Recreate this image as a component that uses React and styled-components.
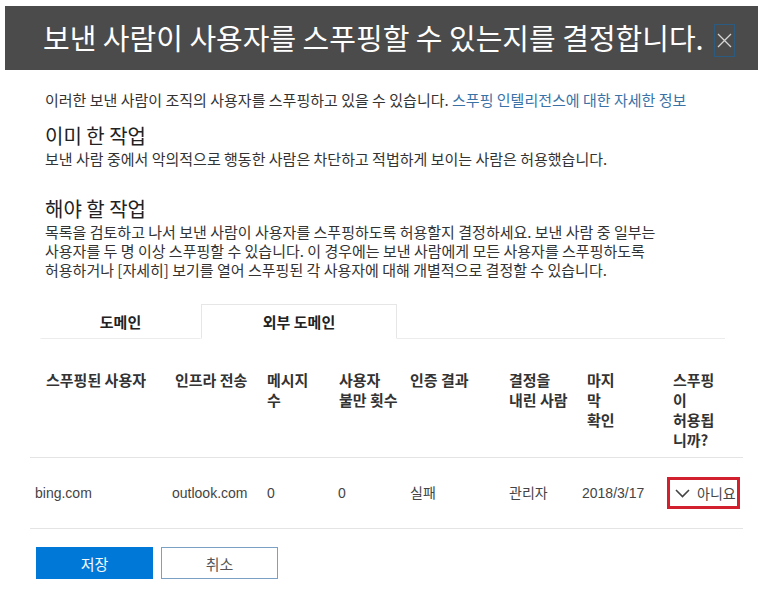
import styled, { createGlobalStyle } from 'styled-components';

const GlobalStyle = createGlobalStyle`
	body {
		margin: 0;
		background-color: #fff;
		font-family: "Noto Sans CJK KR", "Noto Sans", sans-serif;
		color: #333;
	}
`;

const Page = styled.div`
	width: 758px;
	height: 605px;
	overflow: hidden;
`;

const TitleBar = styled.header`
	display: flex;
	align-items: center;
	gap: 10px;
	height: 64px;
	margin: 6px 0 0 5px;
	padding-left: 38px;
	background-color: #4b4b4b;
`;

const Title = styled.h1`
	margin: -2px 0 0;
	color: #fff;
	font-size: 29px;
	font-weight: 400;
	line-height: 1;
	white-space: nowrap;
`;

const CloseButton = styled.button`
	display: flex;
	align-items: center;
	justify-content: center;
	width: 21px;
	height: 33px;
	margin-top: 4px;
	padding: 0;
	border: 1px solid #2c5b82;
	background: transparent;
	color: #d6d6d6;
`;

const Content = styled.main`
	padding-left: 45px;
`;

const Lead = styled.p`
	margin: 20px 0 0;
	font-size: 15px;
	line-height: 20px;
	color: #333;
	white-space: nowrap;
	& a {
		color: #3a72a6;
		text-decoration: none;
	}
`;

const SectionTitle = styled.h2`
	margin: ${p => p.$gap}px 0 0;
	font-size: 20px;
	font-weight: 400;
	line-height: 26px;
	color: #222;
`;

const Body = styled.p`
	margin: 0;
	font-size: 15px;
	line-height: ${p => p.$lh || 20}px;
	color: #333;
	white-space: nowrap;
`;

const Tabs = styled.div`
	display: flex;
	width: 685px;
	height: 35px;
	margin: 25px 0 0 -5px;
`;

const Tab = styled.div`
	display: flex;
	align-items: center;
	justify-content: center;
	box-sizing: border-box;
	width: ${p => p.$width}px;
	font-size: 15px;
	font-weight: 700;
	color: #222;
	border: 1px solid ${p => (p.$active ? '#e6e6e6' : 'transparent')};
	border-bottom: 1px solid ${p => (p.$active ? 'transparent' : '#ececec')};
`;

const TabFiller = styled.div`
	flex: 1;
	border-bottom: 1px solid #ececec;
`;

const Table = styled.div`
	width: 713px;
	margin-left: -15px;
`;

const Row = styled.div`
	display: grid;
	grid-template-columns: 137px 95px 71px 72px 99px 73px 86px 1fr;
	align-items: ${p => (p.$head ? 'start' : 'center')};
	box-sizing: border-box;
	height: ${p => (p.$head ? 119 : 71)}px;
	padding: ${p => (p.$head ? '31px 0 0 5px' : '0 0 0 5px')};
	border-bottom: 1px solid #e4e4e4;
`;

const HeadCell = styled.div`
	padding-left: ${p => p.$indent || 0}px;
	font-size: 15px;
	font-weight: 700;
	line-height: 20px;
	color: #333;
	white-space: nowrap;
`;

const Cell = styled.div`
	font-family: "Liberation Sans", "Noto Sans CJK KR", sans-serif;
	font-size: 14px;
	line-height: 20px;
	color: #444;
	white-space: nowrap;
`;

const Dropdown = styled.div`
	display: flex;
	align-items: center;
	gap: 7px;
	box-sizing: border-box;
	width: 73px;
	height: 32px;
	margin-left: -1px;
	padding-left: 5px;
	border: 3px solid #d3202e;
	font-size: 14px;
	color: #444;
	white-space: nowrap;
`;

const Actions = styled.div`
	display: flex;
	gap: 8px;
	margin: 18px 0 0 -9px;
`;

const Button = styled.button`
	box-sizing: border-box;
	width: 117px;
	height: 32px;
	padding: 0;
	font-family: inherit;
	font-size: 15px;
	border: 1px solid ${p => (p.$primary ? '#0078d7' : '#7aa0c3')};
	background-color: ${p => (p.$primary ? '#0078d7' : '#fff')};
	color: ${p => (p.$primary ? '#f4f8fc' : '#555')};
`;

const headers = [
	{ label: ['스푸핑된 사용자'], indent: 11 },
	{ label: ['인프라 전송'], indent: 3 },
	{ label: ['메시지', '수'] },
	{ label: ['사용자', '불만 횟수'], indent: 1 },
	{ label: ['인증 결과'] },
	{ label: ['결정을', '내린 사람'] },
	{ label: ['마지', '막', '확인'], indent: 5 },
	{ label: ['스푸핑', '이', '허용됩', '니까?'], indent: 5 },
];

const spoofed = [
	{
		id: 1,
		user: 'bing.com',
		infra: 'outlook.com',
		messages: 0,
		complaints: 0,
		auth: '실패',
		decidedBy: '관리자',
		lastSeen: '2018/3/17',
		allowed: '아니요',
	},
];

function Chevron() {
	return (
		<svg width="15" height="9" viewBox="0 0 15 9" fill="none">
			<path d="M1 1l6.5 6.5L14 1" stroke="#444" strokeWidth="1.6" />
		</svg>
	);
}

export default function App() {
	return (
		<Page>
			<GlobalStyle />
			<TitleBar>
				<Title>보낸 사람이 사용자를 스푸핑할 수 있는지를 결정합니다.</Title>
				<CloseButton aria-label="닫기">
					<svg width="15" height="15" viewBox="0 0 15 15">
						<path d="M1 1l13 13M14 1L1 14" stroke="currentColor" strokeWidth="1.3" />
					</svg>
				</CloseButton>
			</TitleBar>
			<Content>
				<Lead>
					이러한 보낸 사람이 조직의 사용자를 스푸핑하고 있을 수 있습니다.{' '}
					<a href="#">스푸핑 인텔리전스에 대한 자세한 정보</a>
				</Lead>
				<SectionTitle $gap={13}>이미 한 작업</SectionTitle>
				<Body>보낸 사람 중에서 악의적으로 행동한 사람은 차단하고 적법하게 보이는 사람은 허용했습니다.</Body>
				<SectionTitle $gap={27}>해야 할 작업</SectionTitle>
				<Body $lh={19}>
					목록을 검토하고 나서 보낸 사람이 사용자를 스푸핑하도록 허용할지 결정하세요. 보낸 사람 중 일부는
					<br />
					사용자를 두 명 이상 스푸핑할 수 있습니다. 이 경우에는 보낸 사람에게 모든 사용자를 스푸핑하도록
					<br />
					허용하거나 [자세히] 보기를 열어 스푸핑된 각 사용자에 대해 개별적으로 결정할 수 있습니다.
				</Body>
				<Tabs>
					<Tab $width={161}>도메인</Tab>
					<Tab $width={196} $active>
						외부 도메인
					</Tab>
					<TabFiller />
				</Tabs>
				<Table>
					<Row $head>
						{headers.map((h, i) => (
							<HeadCell key={i} $indent={h.indent}>
								{h.label.map((line, j) => (
									<div key={j}>{line}</div>
								))}
							</HeadCell>
						))}
					</Row>
					{spoofed.map(item => (
						<Row key={item.id}>
							<Cell>{item.user}</Cell>
							<Cell>{item.infra}</Cell>
							<Cell>{item.messages}</Cell>
							<Cell>{item.complaints}</Cell>
							<Cell>{item.auth}</Cell>
							<Cell>{item.decidedBy}</Cell>
							<Cell>{item.lastSeen}</Cell>
							<Dropdown>
								<Chevron />
								{item.allowed}
							</Dropdown>
						</Row>
					))}
				</Table>
				<Actions>
					<Button $primary>저장</Button>
					<Button>취소</Button>
				</Actions>
			</Content>
		</Page>
	);
}
